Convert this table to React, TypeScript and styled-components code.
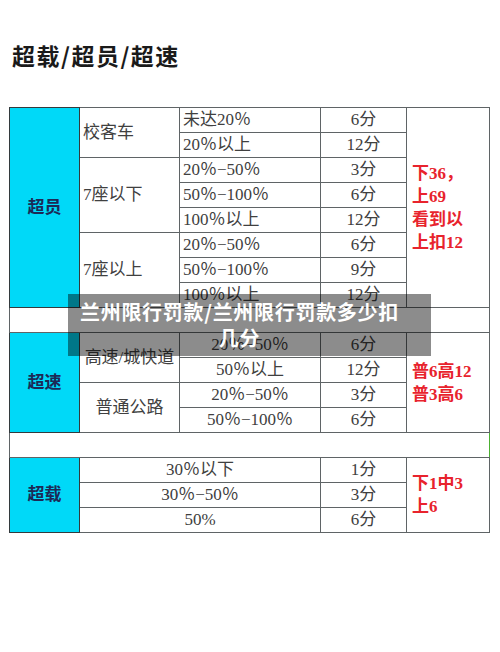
import React from "react";
import styled, { createGlobalStyle } from "styled-components";

const GlobalStyle = createGlobalStyle`
  html, body {
    margin: 0;
    padding: 0;
    background: #ffffff;
  }
  body {
    font-family: "Noto Sans CJK SC", "Noto Sans", sans-serif;
  }
`;

type Row = {
  group?: string;
  groupSpan?: number;
  range: string;
  score: string;
  wide?: boolean;
  center?: boolean;
  note?: string[];
  noteSpan?: number;
};

type Section = {
  title: string;
  rows: Row[];
};

const sections: Section[] = [
  {
    title: "超员",
    rows: [
      { group: "校客车", groupSpan: 2, range: "未达20％", score: "6分", note: ["下36，", "上69", "看到以", "上扣12"], noteSpan: 8 },
      { range: "20％以上", score: "12分" },
      { group: "7座以下", groupSpan: 3, range: "20％−50％", score: "3分" },
      { range: "50％−100％", score: "6分" },
      { range: "100％以上", score: "12分" },
      { group: "7座以上", groupSpan: 3, range: "20％−50％", score: "6分" },
      { range: "50％−100％", score: "9分" },
      { range: "100％以上", score: "12分" },
    ],
  },
  {
    title: "超速",
    rows: [
      { group: "高速/城快道", groupSpan: 2, range: "20％−50％", score: "6分", center: true, note: ["普6高12", "普3高6"], noteSpan: 4 },
      { range: "50％以上", score: "12分", center: true },
      { group: "普通公路", groupSpan: 2, range: "20％−50％", score: "3分", center: true },
      { range: "50％−100％", score: "6分", center: true },
    ],
  },
  {
    title: "超载",
    rows: [
      { range: "30％以下", score: "1分", wide: true, note: ["下1中3", "上6"], noteSpan: 3 },
      { range: "30％−50％", score: "3分", wide: true },
      { range: "50%", score: "6分", wide: true },
    ],
  },
];

function App() {
  return (
    <Page>
      <GlobalStyle />
      <Title>超载/超员/超速</Title>
      <Table>
        <colgroup>
          <col style={{ width: 70 }} />
          <col style={{ width: 100 }} />
          <col style={{ width: 141 }} />
          <col style={{ width: 86 }} />
          <col style={{ width: 83 }} />
        </colgroup>
        <tbody>
          {sections.map((section, si) => (
            <React.Fragment key={section.title}>
              {section.rows.map((row, ri) => (
                <tr key={ri}>
                  {ri === 0 && (
                    <LabelCell rowSpan={section.rows.length}>{section.title}</LabelCell>
                  )}
                  {row.group && (
                    <GroupCell rowSpan={row.groupSpan} $center={row.center}>
                      {row.group}
                    </GroupCell>
                  )}
                  <RangeCell colSpan={row.wide ? 2 : 1} $center={row.center || row.wide}>
                    {row.range}
                  </RangeCell>
                  <ScoreCell>{row.score}</ScoreCell>
                  {row.note && (
                    <NoteCell rowSpan={row.noteSpan}>
                      {row.note.map((line) => (
                        <div key={line}>{line}</div>
                      ))}
                    </NoteCell>
                  )}
                </tr>
              ))}
              {si < sections.length - 1 && (
                <tr>
                  <BlankCell colSpan={5} $green={si === 1} />
                </tr>
              )}
            </React.Fragment>
          ))}
        </tbody>
      </Table>
      <Caption>兰州限行罚款/兰州限行罚款多少扣几分</Caption>
    </Page>
  );
}

const Page = styled.div`
  position: relative;
  width: 500px;
  height: 652px;
  padding: 40px 0 0 9px;
  box-sizing: border-box;
  overflow: hidden;
`;

const Title = styled.h1`
  margin: 0 0 37px 3px;
  height: 30px;
  font-family: "Noto Sans CJK SC", sans-serif;
  font-size: 23px;
  font-weight: 700;
  line-height: 30px;
  letter-spacing: 1.5px;
  color: #1a1a1a;
`;

const Table = styled.table`
  width: 480px;
  border-collapse: collapse;
  table-layout: fixed;
  font-family: "Liberation Serif", "Noto Sans CJK SC", serif;
  font-size: 17px;
  color: #404040;

  td {
    height: 24px;
    padding: 0;
    border: 1px solid #5f6466;
    line-height: 24px;
    white-space: nowrap;
    overflow: visible;
  }
`;

const LabelCell = styled.td`
  background: #00d9f8;
  text-align: center;
  font-family: "Liberation Serif", "Noto Sans CJK SC", serif;
  font-weight: 700;
  color: #1c2a56;
  font-size: 17px;
  border-color: #333a3d !important;
`;

const GroupCell = styled.td<{ $center?: boolean }>`
  text-align: ${(p) => (p.$center ? "center" : "left")};
  padding-left: ${(p) => (p.$center ? "0" : "3px")} !important;
`;

const RangeCell = styled.td<{ $center?: boolean }>`
  text-align: ${(p) => (p.$center ? "center" : "left")};
  padding-left: ${(p) => (p.$center ? "0" : "3px")} !important;
`;

const ScoreCell = styled.td`
  text-align: center;
`;

const NoteCell = styled.td`
  padding-left: 5px !important;
  vertical-align: middle;
  font-weight: 700;
  color: #e8232d;
  line-height: 23px !important;
`;

const BlankCell = styled.td<{ $green?: boolean }>`
  border-right-color: ${(p) => (p.$green ? "#4caf32" : "#5f6466")} !important;
`;

const Caption = styled.div`
  position: absolute;
  left: 68px;
  top: 294px;
  width: 363px;
  height: 62px;
  padding: 5px 30px 5px 10px;
  box-sizing: border-box;
  background: rgba(0, 0, 0, 0.45);
  text-align: center;
  font-family: "Noto Sans CJK SC", sans-serif;
  font-size: 20px;
  font-weight: 700;
  line-height: 26px;
  letter-spacing: 0.7px;
  color: #ffffff;
`;

export default App;
